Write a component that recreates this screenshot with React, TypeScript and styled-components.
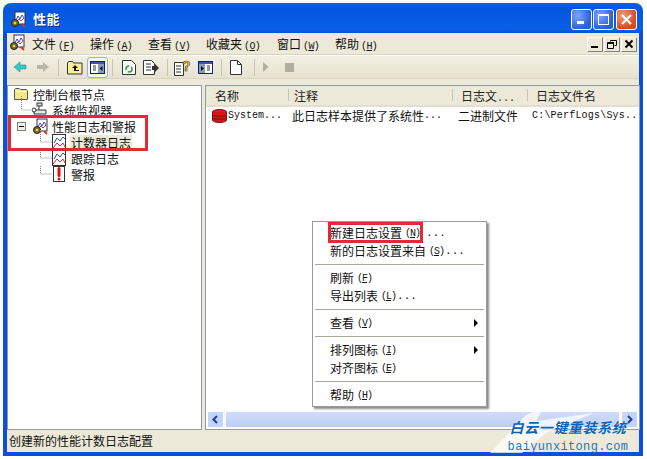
import React from "react";
import styled, { createGlobalStyle } from "styled-components";

const Global = createGlobalStyle`
  html, body { margin: 0; padding: 0; background: #fff; }
  #root { width: 647px; height: 459px; overflow: hidden; }
  * { box-sizing: border-box; }
`;
const FONT = `"Noto Sans CJK SC", "Liberation Sans", sans-serif`;
const Page = styled.div`
  position: relative; width: 647px; height: 459px; padding: 3px 4px 3px 3px;
  font: 12px/16px ${FONT}; color: #111; background: #fff;
`;
const Window = styled.div`
  width: 640px; height: 453px; display: flex; flex-direction: column;
  background: #0a50dc; border-radius: 8px 8px 0 0; padding: 0 4px 4px 4px;
  background-image: linear-gradient(#0a60e8 0, #0458e0 6px, #0a5fe6 26px, #0350d8 30px);
  background-size: 100% 30px; background-repeat: no-repeat;
`;
const TitleBar = styled.div`
  height: 30px; display: flex; align-items: center; padding: 2px 2px 0 3px; flex: none;
`;
const TitleText = styled.span`
  color: #fff; font-size: 13px; font-weight: 700; flex: 1; margin-left: 6px; text-shadow: 1px 1px 0 #0a2a8a; letter-spacing: .5px;
`;
const CapBtn = styled.div<{ $close?: boolean; $gap?: number }>`
  width: 21px; height: 21px; border: 1px solid #fff; border-radius: 3px; margin-left: ${p => p.$gap ?? 1}px;
  background: ${p => p.$close ? "radial-gradient(circle at 30% 30%, #f0a080, #d84a20 70%)" : "radial-gradient(circle at 30% 30%, #7fa6f5, #2a5fdc 70%)"};
  display: flex; align-items: center; justify-content: center;
`;
const Chrome = styled.div`
  flex: 1; min-height: 0; display: flex; flex-direction: column; background: #ece9d8;
`;
const MenuBar = styled.div`
  height: 23px; flex: none; display: flex; align-items: center; padding-left: 2px;
  border-bottom: 1px solid #fff; box-shadow: inset 0 -1px 0 #d8d4c0; position: relative;
`;
const MenuItem = styled.span<{ $w: number }>`
  width: ${p => p.$w}px; flex: none; white-space: nowrap; font-size: 12px;
`;
const Key = styled.span`
  font: 10px "Liberation Mono", monospace; margin-left: 2px; letter-spacing: -.6px;
  & > u { text-underline-offset: 1px; }
`;
const MdiBtns = styled.div`
  margin-left: auto; margin-right: 2px; display: flex; gap: 1px;
`;
const MdiBtn = styled.div`
  width: 16px; height: 15px; background: #ece9d8; border: 1px solid; border-color: #fff #808080 #808080 #fff;
  display: flex; align-items: center; justify-content: center;
`;
const Toolbar = styled.div`
  height: 23px; flex: none; display: flex; align-items: center; padding-left: 5px;
  background: linear-gradient(#f2f0e4, #e6e2d0); border-bottom: 1px solid #d8d4c0;
`;
const Tool = styled.div<{ $w: number; $on?: boolean; $ml?: number }>`
  width: ${p => p.$w}px; height: 21px; flex: none; display: flex; align-items: center; justify-content: center;
  margin-left: ${p => p.$ml ?? 0}px;
  ${p => p.$on ? "background:#f6f5ef;border:1px solid #a0b0c8;border-radius:3px;" : ""}
`;
const Sep = styled.div<{ $l: number }>`
  width: 1px; height: 17px; background: #c8c4b0; margin: 0 5px 0 ${p => p.$l}px; flex: none;
`;
const Panes = styled.div`
  flex: 1; min-height: 0; display: flex; gap: 3px; padding-top: 6px; 
`;
const Pane = styled.div<{ $w: number }>`
  width: ${p => p.$w}px; flex: none; background: #fff; border: 1px solid #8f9aa3;
  border-bottom-color: #999; display: flex; flex-direction: column; min-height: 0;
`;
const Tree = styled.div`
  padding-top: 0;
`;
const TreeRow = styled.div<{ $indent: number }>`
  height: 16px; display: flex; align-items: center; padding-left: ${p => p.$indent}px; position: relative; white-space: nowrap;
`;
const TreeIcon = styled.span`
  width: 16px; height: 16px; flex: none; display: inline-block; position: relative;
`;
const TreeLabel = styled.span<{ $sel?: boolean }>`
  margin-left: 3px; padding: 0 1px; line-height: 15px; font-size: 12px; ${p => p.$sel ? "background:#ece9d8;" : ""}
`;
const Expander = styled.span`
  position: absolute; left: 9px; top: 4px; width: 9px; height: 9px; border: 1px solid #808080; background: #f0efe6; z-index: 1;
  &::after { content: ""; position: absolute; left: 1px; right: 1px; top: 3px; height: 1px; background: #000; }
`;
const Connector = styled.svg`
  position: absolute; left: 0; top: 0; width: 100px; height: 16px; overflow: visible; pointer-events: none;
`;
const Header = styled.div`
  height: 21px; flex: none; display: flex; background: #ece9d8; border-bottom: 2px solid #e2dfcd;
`;
const HeaderCell = styled.div<{ $w: number; $pad: number }>`
  width: ${p => p.$w}px; flex: none; padding-left: ${p => p.$pad}px; line-height: 20px; position: relative; color: #222;
  &:not(:last-child)::after { content: ""; position: absolute; right: 0; top: 3px; bottom: 4px; width: 1px; background: #c8c4b0; }
`;
const DataRow = styled.div`
  height: 17px; flex: none; display: flex; align-items: center; white-space: nowrap; font-size: 12px;
`;
const DataCell = styled.div<{ $w: number; $pad?: number; $mono?: boolean }>`
  width: ${p => p.$w}px; flex: none; padding-left: ${p => p.$pad ?? 0}px; display: flex; align-items: center; overflow: hidden;
  ${p => p.$mono ? `font: 10px "Liberation Mono", "Noto Sans CJK SC", monospace; letter-spacing: .2px;` : ""}
`;
const Mono = styled.span<{ $ml?: number }>`
  font: 10px "Liberation Mono", monospace; margin-left: ${p => p.$ml ?? 0}px;
`;
const Spacer = styled.div`
  flex: 1;
`;
const ScrollBar = styled.div`
  height: 17px; flex: none; margin: 0 1px 1px 1px; display: flex; gap: 1px; background: #f0f4fc;
`;
const ScrollArrow = styled.div`
  width: 17px; flex: none; border: 1px solid #fff; border-radius: 2px; background: #c3d3fb;
  display: flex; align-items: center; justify-content: center;
`;
const ScrollThumb = styled.div`
  flex: 1; border: 1px solid #fff; border-radius: 2px; background: linear-gradient(#d0dcfa, #bccdf6);
`;
const StatusBar = styled.div`
  height: 22px; flex: none; display: flex; align-items: center; padding-left: 2px; font-size: 12px; 
`;
const Highlight = styled.div<{ $x: number; $y: number; $w: number; $h: number }>`
  position: absolute; left: ${p => p.$x}px; top: ${p => p.$y}px; width: ${p => p.$w}px; height: ${p => p.$h}px;
  border: 3px solid #df2b35; pointer-events: none; z-index: 5;
`;
const ContextMenu = styled.div`
  position: absolute; left: 312px; top: 221px; width: 175px; height: 186px; padding: 2px 2px;
  background: #fff; border: 1px solid #9a9a9a; box-shadow: 2px 2px 2px #8a8a8a; z-index: 4; font-size: 12px;
`;
const CtxItem = styled.div`
  height: 18px; display: flex; align-items: center; padding-left: 15px; position: relative; white-space: nowrap;
`;
const CtxSep = styled.div`
  height: 1px; background: #aca899; margin: 4px 0;
`;
const CtxKey = styled.span`
  font: 10px "Liberation Mono", monospace; margin-left: 3px; letter-spacing: -1px;
`;
const CtxDots = styled.span<{ $ml?: number }>`
  font: 11px "Liberation Mono", monospace; margin-left: ${p => p.$ml ?? 1}px;
`;
const Arrow = styled.span`
  position: absolute; right: 6px; top: 5px; width: 0; height: 0;
  border-left: 4px solid #000; border-top: 4px solid transparent; border-bottom: 4px solid transparent;
`;
const Watermark = styled.div`
  position: absolute; left: 498px; top: 419px; width: 140px; z-index: 6; display: flex; flex-direction: column; align-items: center;
`;
const WmGhost = styled.svg`
  position: absolute; left: -12px; top: -16px; width: 130px; height: 56px;
`;
const WmTop = styled.div`
  position: relative; font: italic 700 14px/16px ${FONT}; color: #0b63b8; letter-spacing: 0.6px; white-space: nowrap;
  text-shadow: 0 0 2px #fff;
`;
const WmBottom = styled.div`
  position: relative; font: 12px/16px "Liberation Mono", monospace; color: #2a74c0; white-space: nowrap; margin-top: 4px; letter-spacing: .35px;
`;

const Perf = () => (
  <svg width="17" height="17" viewBox="0 0 17 17">
    <rect x="5" y="1" width="10" height="12" fill="#fff" stroke="#333" />
    <path d="M6 9l2-4 2 3 2-4 2 3" stroke="#2a4fc0" fill="none" />
    <path d="M6 11l3-3 2 2 3-3" stroke="#d03030" fill="none" />
    <circle cx="5" cy="12" r="3.5" fill="#7a6a20" stroke="#222" />
    <circle cx="5" cy="12" r="1.3" fill="#e8d060" />
    <path d="M12 13l3 3" stroke="#c04030" strokeWidth="2" />
  </svg>
);
const Folder = () => (
  <svg width="16" height="16" viewBox="0 0 16 16"><path d="M1.5 13.5v-10l1-1h4l1 1h6l1 1v9z" fill="#f5e690" stroke="#5a5a40" /><path d="M3 5.5h11" stroke="#fff" /></svg>
);
const Monitor = () => (
  <svg width="16" height="16" viewBox="0 0 16 16"><rect x="5" y="1" width="5" height="3" fill="#ddd" stroke="#333" /><path d="M7 4v4M2 8h12v4H2z" fill="#e8e8e8" stroke="#333" /><circle cx="2" cy="8" r="2" fill="#fff" stroke="#333" /></svg>
);
const Chart = () => (
  <svg width="16" height="16" viewBox="0 0 16 16"><rect x="1.5" y=".5" width="13" height="15" fill="#fff" stroke="#333" /><path d="M3 9l3-5 3 3 3-4 2 2" stroke="#2a4fc0" fill="none" /><path d="M2 14l4-5 3 3 3-3 2 4" stroke="#d03030" fill="none" /></svg>
);
const Alert = () => (
  <svg width="16" height="16" viewBox="0 0 16 16"><rect x="2.5" y=".5" width="11" height="15" fill="#fff" stroke="#333" /><path d="M8 2.5v7" stroke="#e01010" strokeWidth="3" strokeLinecap="round" /><circle cx="8" cy="13" r="1.5" fill="#e01010" /></svg>
);
const Disk = () => (
  <svg width="15" height="14" viewBox="0 0 15 14"><ellipse cx="7.5" cy="3" rx="7" ry="2.5" fill="#e02020" stroke="#801010" /><path d="M.5 3v8c0 1.5 3 2.5 7 2.5s7-1 7-2.5V3" fill="#d01818" stroke="#801010" /><path d="M.5 6c1 1.5 13 1.5 14 0M.5 9c1 1.5 13 1.5 14 0" stroke="#801010" fill="none" /></svg>
);
const T = {
  back: <svg width="14" height="12" viewBox="0 0 14 12"><path d="M7 1L1 6l6 5V8h6V4H7z" fill="#35c8c8" stroke="#209090" strokeWidth=".6" /></svg>,
  fwd: <svg width="14" height="12" viewBox="0 0 14 12"><path d="M7 1l6 5-6 5V8H1V4h6z" fill="#b8b6a8" /></svg>,
  up: <svg width="16" height="15" viewBox="0 0 16 15"><path d="M.5 14V3l1-1.5h4l1 1.5h8.500v11z" fill="#f6ee90" stroke="#333" /><path d="M8 5L5 8h2v3h5v-1H9V8h2z" fill="#111" /></svg>,
  tree: <svg width="15" height="13" viewBox="0 0 15 13"><rect x=".5" y=".5" width="14" height="12" fill="#fff" stroke="#0a246a" /><rect x="1" y="1" width="13" height="2" fill="#3a5aa0" /><rect x="8" y="3" width="6" height="9" fill="#8a9ac0" /><path d="M12.500 5l-3 2.500 3 2.500z" fill="#111" /><path d="M3 5h3M3 7h3M3 9h3" stroke="#333" /></svg>,
  refresh: <svg width="14" height="15" viewBox="0 0 14 15"><path d="M.5 .5h9l4 4v10H.5z" fill="#fff" stroke="#333" /><circle cx="7" cy="9" r="3" fill="none" stroke="#20a030" strokeWidth="1.500" strokeDasharray="6 2" /></svg>,
  exp: <svg width="16" height="15" viewBox="0 0 16 15"><path d="M.5 .5h8l3 3v11H.5z" fill="#fff" stroke="#333" /><path d="M3 4h5M3 7h5M3 10h5" stroke="#333" /><path d="M9 6h3V4l4 4-4 4v-2H9z" fill="#333" /></svg>,
  help: <svg width="17" height="17" viewBox="0 0 17 17"><path d="M.5 3.500h9v13h-9z" fill="#fff" stroke="#333" /><path d="M2 7h5M2 10h5M2 13h5" stroke="#333" /><text x="8" y="12" fontFamily="Liberation Sans" fontWeight="700" fontSize="14" fill="#ecd020" stroke="#333" strokeWidth=".5">?</text></svg>,
  desc: <svg width="15" height="13" viewBox="0 0 15 13"><rect x=".5" y=".5" width="14" height="12" fill="#fff" stroke="#0a246a" /><rect x="1" y="1" width="13" height="2" fill="#3a5aa0" /><rect x="1" y="3" width="6" height="9" fill="#8a9ac0" /><path d="M3 5l3 2.500-3 2.500z" fill="#111" /><path d="M9 5h3M9 7h3M9 9h3" stroke="#333" /></svg>,
  page: <svg width="12" height="15" viewBox="0 0 12 15"><path d="M.5 .5h7l4 4v10H.5z" fill="#fff" stroke="#333" /><path d="M7.500 .5v4h4" fill="none" stroke="#333" /></svg>,
  play: <svg width="6" height="10" viewBox="0 0 6 10"><path d="M0 0l5.500 5L0 10z" fill="#b0ae9e" /></svg>,
  stop: <svg width="9" height="9" viewBox="0 0 9 9"><rect width="9" height="9" fill="#b0ae9e" /></svg>,
};

const Link = ({ d }: { d: string }) => (
  <Connector><path d={d} stroke="#888" strokeDasharray="1 1" fill="none" /></Connector>
);
const K = ({ c }: { c: string }) => <Key>(<u>{c}</u>)</Key>;
const CK = ({ c }: { c: string }) => <CtxKey>(<u>{c}</u>)</CtxKey>;

export default function App() {
  return (
    <Page>
      <Global />
      <Window>
        <TitleBar>
          <Perf />
          <TitleText>性能</TitleText>
          <CapBtn><svg width="11" height="11"><rect x="1" y="7" width="7" height="3" fill="#fff" /></svg></CapBtn>
          <CapBtn><svg width="13" height="13"><rect x="1.500" y="1.500" width="10" height="10" fill="none" stroke="#fff" /><rect x="1" y="1" width="11" height="2" fill="#fff" /></svg></CapBtn>
          <CapBtn $close $gap={2}><svg width="13" height="13"><path d="M2 2l9 9M11 2l-9 9" stroke="#fff" strokeWidth="2.200" /></svg></CapBtn>
        </TitleBar>
        <Chrome>
          <MenuBar>
            <MenuItem $w={23}><Perf /></MenuItem>
            <MenuItem $w={58}>文件<K c="F" /></MenuItem>
            <MenuItem $w={58}>操作<K c="A" /></MenuItem>
            <MenuItem $w={58}>查看<K c="V" /></MenuItem>
            <MenuItem $w={71}>收藏夹<K c="O" /></MenuItem>
            <MenuItem $w={58}>窗口<K c="W" /></MenuItem>
            <MenuItem $w={58}>帮助<K c="H" /></MenuItem>
            <MdiBtns>
              <MdiBtn><svg width="10" height="10"><rect x="1" y="7" width="7" height="2" fill="#000" /></svg></MdiBtn>
              <MdiBtn><svg width="10" height="10"><path d="M3.500 2.500v-1h6v5h-2M.5 3.500h6v6h-6z" fill="none" stroke="#000" /><rect x="1" y="3" width="6" height="2" fill="#000" /></svg></MdiBtn>
              <MdiBtn><svg width="10" height="10"><path d="M1.500 1.500l7 7M8.500 1.500l-7 7" stroke="#000" strokeWidth="2" /></svg></MdiBtn>
            </MdiBtns>
          </MenuBar>
          <Toolbar>
            <Tool $w={16}>{T.back}</Tool>
            <Tool $w={30}>{T.fwd}</Tool>
            <Sep $l={0} />
            <Tool $w={21}>{T.up}</Tool>
            <Tool $w={21} $on $ml={2}>{T.tree}</Tool>
            <Sep $l={4} />
            <Tool $w={21}>{T.refresh}</Tool>
            <Tool $w={24}>{T.exp}</Tool>
            <Sep $l={4} />
            <Tool $w={19}>{T.help}</Tool>
            <Tool $w={26}>{T.desc}</Tool>
            <Sep $l={3} />
            <Tool $w={18}>{T.page}</Tool>
            <Sep $l={9} />
            <Tool $w={12}>{T.play}</Tool>
            <Tool $w={34}>{T.stop}</Tool>
          </Toolbar>
          <Panes>
            <Pane $w={195}>
              <Tree>
                <TreeRow $indent={5}><TreeIcon><Folder /></TreeIcon><TreeLabel>控制台根节点</TreeLabel></TreeRow>
                <TreeRow $indent={24}>
                  <Link d="M13.500 -6V8H26" />
                  <TreeIcon><Monitor /></TreeIcon><TreeLabel>系统监视器</TreeLabel>
                </TreeRow>
                <TreeRow $indent={24}>
                  <Expander />
                  <TreeIcon><Perf /></TreeIcon><TreeLabel>性能日志和警报</TreeLabel>
                </TreeRow>
                <TreeRow $indent={43}>
                  <Link d="M32.500 -4V8H44" />
                  <TreeIcon><Chart /></TreeIcon><TreeLabel $sel>计数器日志</TreeLabel>
                </TreeRow>
                <TreeRow $indent={43}>
                  <Link d="M32.500 0V8H44" />
                  <TreeIcon><Chart /></TreeIcon><TreeLabel>跟踪日志</TreeLabel>
                </TreeRow>
                <TreeRow $indent={43}>
                  <Link d="M32.500 0V8H44" />
                  <TreeIcon><Alert /></TreeIcon><TreeLabel>警报</TreeLabel>
                </TreeRow>
              </Tree>
            </Pane>
            <Pane $w={435}>
              <Header>
                <HeaderCell $w={83} $pad={9}>名称</HeaderCell>
                <HeaderCell $w={164} $pad={5}>注释</HeaderCell>
                <HeaderCell $w={75} $pad={8}>日志文<Mono>...</Mono></HeaderCell>
                <HeaderCell $w={110} $pad={8}>日志文件名</HeaderCell>
              </Header>
              <DataRow>
                <DataCell $w={86} $pad={6}><Disk /><Mono $ml={1}>System...</Mono></DataCell>
                <DataCell $w={166}>此日志样本提供了系统性<Mono>...</Mono></DataCell>
                <DataCell $w={74}>二进制文件</DataCell>
                <DataCell $w={107} $mono>C:\PerfLogs\Sys...</DataCell>
              </DataRow>
              <Spacer />
              <ScrollBar>
                <ScrollArrow><svg width="9" height="9"><path d="M6 1L2.500 4.500 6 8" stroke="#20408a" strokeWidth="2" fill="none" /></svg></ScrollArrow>
                <ScrollThumb />
                <ScrollArrow><svg width="9" height="9"><path d="M3 1l3.500 3.500L3 8" stroke="#20408a" strokeWidth="2" fill="none" /></svg></ScrollArrow>
              </ScrollBar>
            </Pane>
          </Panes>
          <StatusBar>创建新的性能计数日志配置</StatusBar>
        </Chrome>
      </Window>

      <ContextMenu>
        <CtxItem>新建日志设置<CK c="N" /><CtxDots $ml={6}>...</CtxDots></CtxItem>
        <CtxItem>新的日志设置来自<CK c="S" /><CtxDots>...</CtxDots></CtxItem>
        <CtxSep />
        <CtxItem>刷新<CK c="F" /></CtxItem>
        <CtxItem>导出列表<CK c="L" /><CtxDots>...</CtxDots></CtxItem>
        <CtxSep />
        <CtxItem>查看<CK c="V" /><Arrow /></CtxItem>
        <CtxSep />
        <CtxItem>排列图标<CK c="I" /><Arrow /></CtxItem>
        <CtxItem>对齐图标<CK c="E" /></CtxItem>
        <CtxSep />
        <CtxItem>帮助<CK c="H" /></CtxItem>
      </ContextMenu>
      <Highlight $x={8} $y={115} $w={140} $h={36} />
      <Highlight $x={328} $y={222} $w={95} $h={21} />
      <Watermark>
        <WmGhost viewBox="0 0 130 56"><path d="M4 50L40 12 58 4 50 18 108 10 60 30 36 50z" fill="#fff" opacity=".75" /></WmGhost>
        <WmTop>白云一键重装系统</WmTop>
        <WmBottom>baiyunxitong.com</WmBottom>
      </Watermark>
    </Page>
  );
}
